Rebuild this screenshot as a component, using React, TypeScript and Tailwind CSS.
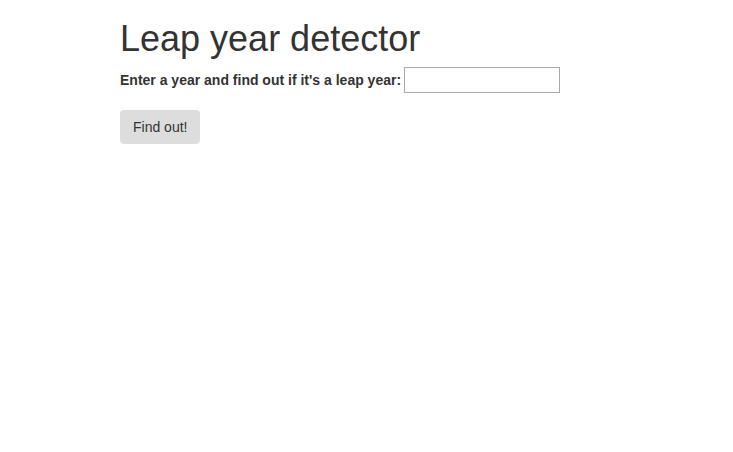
import React, { useState } from 'react';

const App = () => {
    const [year, setYear] = useState('');

    return (
        <div className="min-h-screen bg-white text-[#333] font-['Liberation_Sans',Arial,sans-serif] pl-[120px] pt-[19px]">
            <h1 className="text-[36px] leading-[1.1] font-normal">Leap year detector</h1>
            <div className="mt-[8px] flex items-center">
                <label htmlFor="year" className="text-[14px] font-bold mr-[3px] pt-[2px]">Enter a year and find out if it's a leap year:</label>
                <input
                    id="year"
                    type="text"
                    value={year}
                    onChange={e => setYear(e.target.value)}
                    className="w-[156px] h-[26px] border border-[#a9a9a9] px-1 text-[14px] outline-none"
                />
            </div>
            <button className="mt-[17px] h-[34px] px-[13px] pt-[1px] bg-[#ddd] rounded-[4px] text-[14px] text-[#333]">Find out!</button>
        </div>
    );
};

export default App;
